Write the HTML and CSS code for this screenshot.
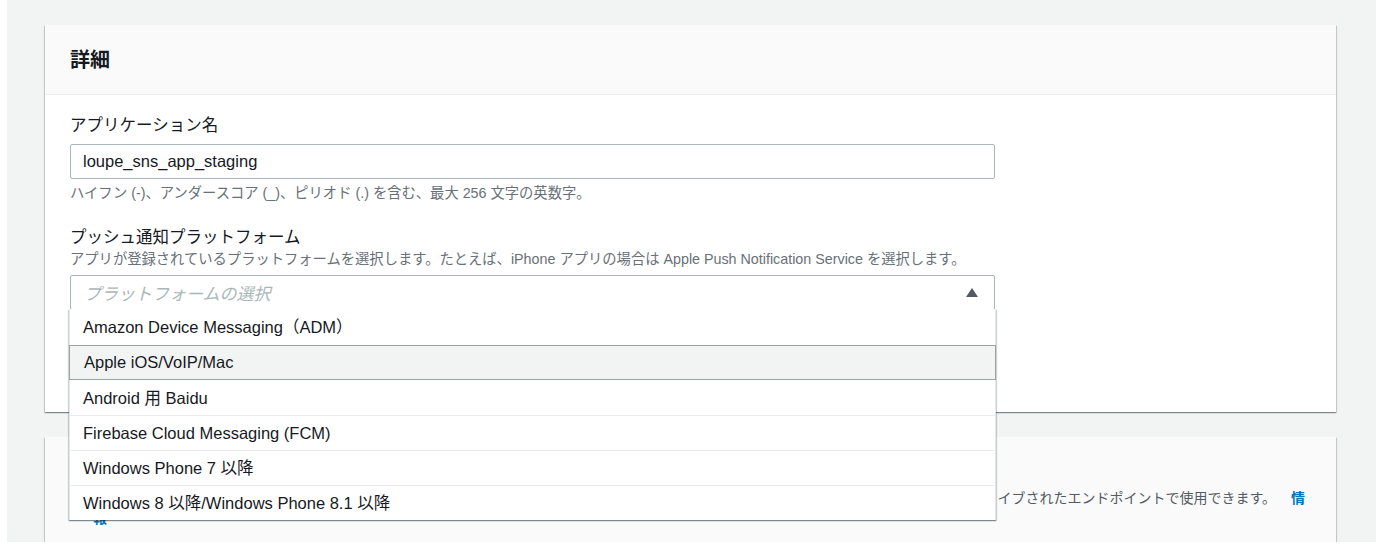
FILE: index.html
```html
<!DOCTYPE html>
<html lang="ja">
<head>
<meta charset="utf-8">
<title>プラットフォームアプリケーションの作成</title>
<link rel="stylesheet" href="styles.css">
</head>
<body>
<div class="page">
  <section class="card card-details">
    <header class="card-header">
      <h2 class="card-title">詳細</h2>
    </header>
    <div class="card-body">
      <div class="field">
        <label class="field-label">アプリケーション名</label>
        <div class="input">loupe_sns_app_staging</div>
        <p class="hint">ハイフン (-)、アンダースコア (_)、ピリオド (.) を含む、最大 256 文字の英数字。</p>
      </div>
      <div class="field field-push">
        <label class="field-label">プッシュ通知プラットフォーム</label>
        <p class="desc">アプリが登録されているプラットフォームを選択します。たとえば、iPhone アプリの場合は Apple Push Notification Service を選択します。</p>
        <div class="select-wrap">
          <div class="select">
            <span class="placeholder">プラットフォームの選択</span>
            <span class="caret"></span>
          </div>
          <ul class="dropdown">
            <li class="option">Amazon Device Messaging（ADM）</li>
            <li class="option option-active">Apple iOS/VoIP/Mac</li>
            <li class="option">Android 用 Baidu</li>
            <li class="option">Firebase Cloud Messaging (FCM)</li>
            <li class="option">Windows Phone 7 以降</li>
            <li class="option">Windows 8 以降/Windows Phone 8.1 以降</li>
          </ul>
        </div>
      </div>
    </div>
  </section>
  <section class="card card-logging">
    <header class="card-header card-header-tall">
      <h2 class="card-title">配信ステータスのログ記録 - オプション</h2>
      <p class="card-desc"><span class="card-desc-text">配信ステータスのログ記録は、このプラットフォームアプリケーションにサブスクライブされたエンドポイントで使用できます。</span><a class="info-link" href="#">情報</a></p>
    </header>
  </section>
</div>
</body>
</html>
```
FILE: styles.css
```css
* {
  box-sizing: border-box;
}

html,
body {
  margin: 0;
  background: #ffffff;
}

body {
  font-family: "Liberation Sans", "Noto Sans CJK JP", sans-serif;
  color: #16191f;
}

.page {
  margin-left: 7px;
  height: 542px;
  overflow: hidden;
  background: #f2f3f3;
  padding: 25px 40px 0 38px;
  display: flex;
  flex-direction: column;
  gap: 25px;
}

.card {
  background: #ffffff;
  box-shadow: 0 1px 1px 0 rgba(0, 28, 36, 0.3), 1px 1px 1px 0 rgba(0, 28, 36, 0.15), -1px 1px 1px 0 rgba(0, 28, 36, 0.15);
  flex-shrink: 0;
}

.card-details {
  height: 387px;
}

.card-logging {
  height: 200px;
  background: #fafafa;
}

.card-header {
  height: 70px;
  padding: 0 25px;
  display: flex;
  align-items: center;
  background: #fafafa;
  border-bottom: 1px solid #eaeded;
}

.card-header-tall {
  height: auto;
  display: block;
  padding: 20px 25px 20px;
  border-bottom: none;
}

.card-title {
  margin: 0;
  font-size: 20px;
  line-height: 26px;
  font-weight: 700;
  color: #16191f;
}

.card-body {
  padding: 19px 25px 0;
}

.field-label {
  display: block;
  font-size: 16.5px;
  line-height: 22px;
}

.input {
  margin-top: 8px;
  width: 925px;
  height: 35px;
  border: 1px solid #aab7b8;
  border-radius: 2px;
  padding: 0 12px;
  font-size: 16.5px;
  line-height: 33px;
  color: #16191f;
}

.hint {
  margin: 5px 0 0;
  font-size: 14.3px;
  line-height: 18px;
  color: #687078;
}

.field-push {
  margin-top: 24px;
}

.desc {
  margin: 2px 0 0;
  font-size: 14.3px;
  line-height: 18px;
  color: #687078;
}

.select-wrap {
  position: relative;
  z-index: 10;
  margin-top: 7px;
  width: 925px;
}

.select {
  height: 35px;
  border: 1px solid #aab7b8;
  border-radius: 2px;
  padding: 0 16px 0 13px;
  display: flex;
  align-items: center;
  justify-content: space-between;
  background: #ffffff;
}

.placeholder {
  font-size: 17px;
  font-style: italic;
  color: #aab7b8;
}

.caret {
  width: 0;
  height: 0;
  border-left: 6px solid transparent;
  border-right: 6px solid transparent;
  border-bottom: 9px solid #545b64;
}

.dropdown {
  position: absolute;
  top: calc(100% - 1px);
  left: -1px;
  right: -1px;
  margin: 0;
  padding: 0;
  list-style: none;
  background: #ffffff;
  border-left: 1px solid #e3e7e7;
  border-right: 1px solid #e3e7e7;
  box-shadow: 0 1px 1px 0 rgba(0, 28, 36, 0.3), 1px 1px 1px 0 rgba(0, 28, 36, 0.15), -1px 1px 1px 0 rgba(0, 28, 36, 0.15);
}

.option {
  height: 35px;
  padding: 0 13px;
  font-size: 16.5px;
  line-height: 34px;
  border-top: 1px solid #eaeded;
  color: #16191f;
  white-space: nowrap;
}

.option:first-child {
  height: 36px;
  line-height: 35px;
  border-top-color: transparent;
}

.option-active {
  background: #f2f3f3;
  border: 1px solid #99a3a4;
  margin: 0 -1px;
  padding: 0 14px;
  line-height: 33px;
}

.option-active + .option {
  border-top-color: transparent;
}

.card-desc {
  margin: 5px 0 0;
  padding-left: 23px;
  text-indent: -23px;
  font-size: 14px;
  line-height: 20px;
  color: #545b64;
}

.card-desc-text {
  display: inline-block;
  width: 1206px;
  text-align: right;
  white-space: nowrap;
  vertical-align: top;
  text-indent: 0;
}

.info-link {
  margin-left: 15px;
  font-weight: 700;
  color: #0073bb;
  text-decoration: none;
}
```
